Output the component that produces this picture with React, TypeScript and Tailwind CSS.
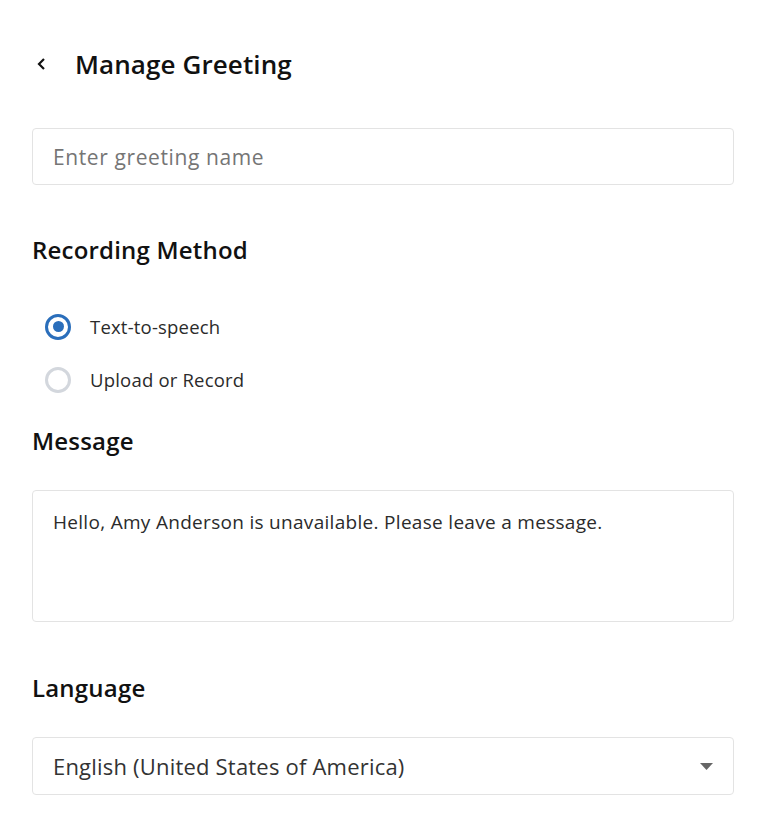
import { useState } from 'react';

const font = { fontFamily: '"Open Sans", "Noto Sans", sans-serif' };

function Radio({ checked, label, onSelect }: { checked: boolean; label: string; onSelect: () => void }) {
  return (
    <button type="button" onClick={onSelect} className="flex h-[53px] items-center gap-[19px] pl-[13px] text-left">
      <span
        className={`flex size-[26px] items-center justify-center rounded-full border-[3px] ${
          checked ? 'border-[#2a6ebb]' : 'border-[#d3d7dd]'
        }`}
      >
        {checked && <span className="size-[11px] rounded-full bg-[#2a6ebb]" />}
      </span>
      <span className="text-[18.5px] tracking-[0.2px] text-[#2b2b2b]">{label}</span>
    </button>
  );
}

export default function App() {
  const [method, setMethod] = useState<'tts' | 'upload'>('tts');

  return (
    <div className="min-h-screen bg-white text-black" style={font}>
      <div className="px-[32px] pt-[44px] pr-[44px]">
        <div className="flex h-[40px] items-center">
          <button type="button" aria-label="Back" className="flex w-[43px] items-center pl-[4px]">
            <svg width="12" height="14" viewBox="0 0 12 14" fill="none">
              <path d="M8 2L3 7l5 5" stroke="#111" strokeWidth="2.2" />
            </svg>
          </button>
          <h1 className="text-[26px] font-semibold tracking-[0.1px] text-[#111]">Manage Greeting</h1>
        </div>

        <input
          type="text"
          placeholder="Enter greeting name"
          className="mt-[44px] h-[57px] w-full rounded-[4px] border border-[#e3e3e3] px-[20px] text-[21px] tracking-[0.6px] text-[#333] outline-none placeholder:text-[#757575]"
        />

        <h2 className="mt-[47px] text-[24px] font-semibold tracking-[0.2px] text-[#111]">Recording Method</h2>

        <div className="mt-[32px] flex flex-col">
          <Radio checked={method === 'tts'} label="Text-to-speech" onSelect={() => setMethod('tts')} />
          <Radio checked={method === 'upload'} label="Upload or Record" onSelect={() => setMethod('upload')} />
        </div>

        <h2 className="mt-[17px] text-[24px] font-semibold tracking-[0.2px] text-[#111]">Message</h2>

        <textarea
          defaultValue="Hello, Amy Anderson is unavailable. Please leave a message."
          className="mt-[31px] block h-[132px] w-full resize-none rounded-[4px] border border-[#e3e3e3] px-[20px] py-[17px] text-[19px] tracking-[0.3px] text-[#2b2b2b] outline-none"
        />

        <h2 className="mt-[48px] text-[24px] font-semibold tracking-[0.2px] text-[#111]">Language</h2>

        <button
          type="button"
          className="mt-[31px] flex h-[58px] w-full items-center justify-between rounded-[4px] border border-[#e3e3e3] pl-[20px] pr-[20px] text-left"
        >
          <span className="text-[22px] tracking-[0.2px] text-[#333]">English (United States of America)</span>
          <svg width="13" height="7" viewBox="0 0 13 7">
            <path d="M0 0h13L6.5 7z" fill="#666" />
          </svg>
        </button>
      </div>
    </div>
  );
}
